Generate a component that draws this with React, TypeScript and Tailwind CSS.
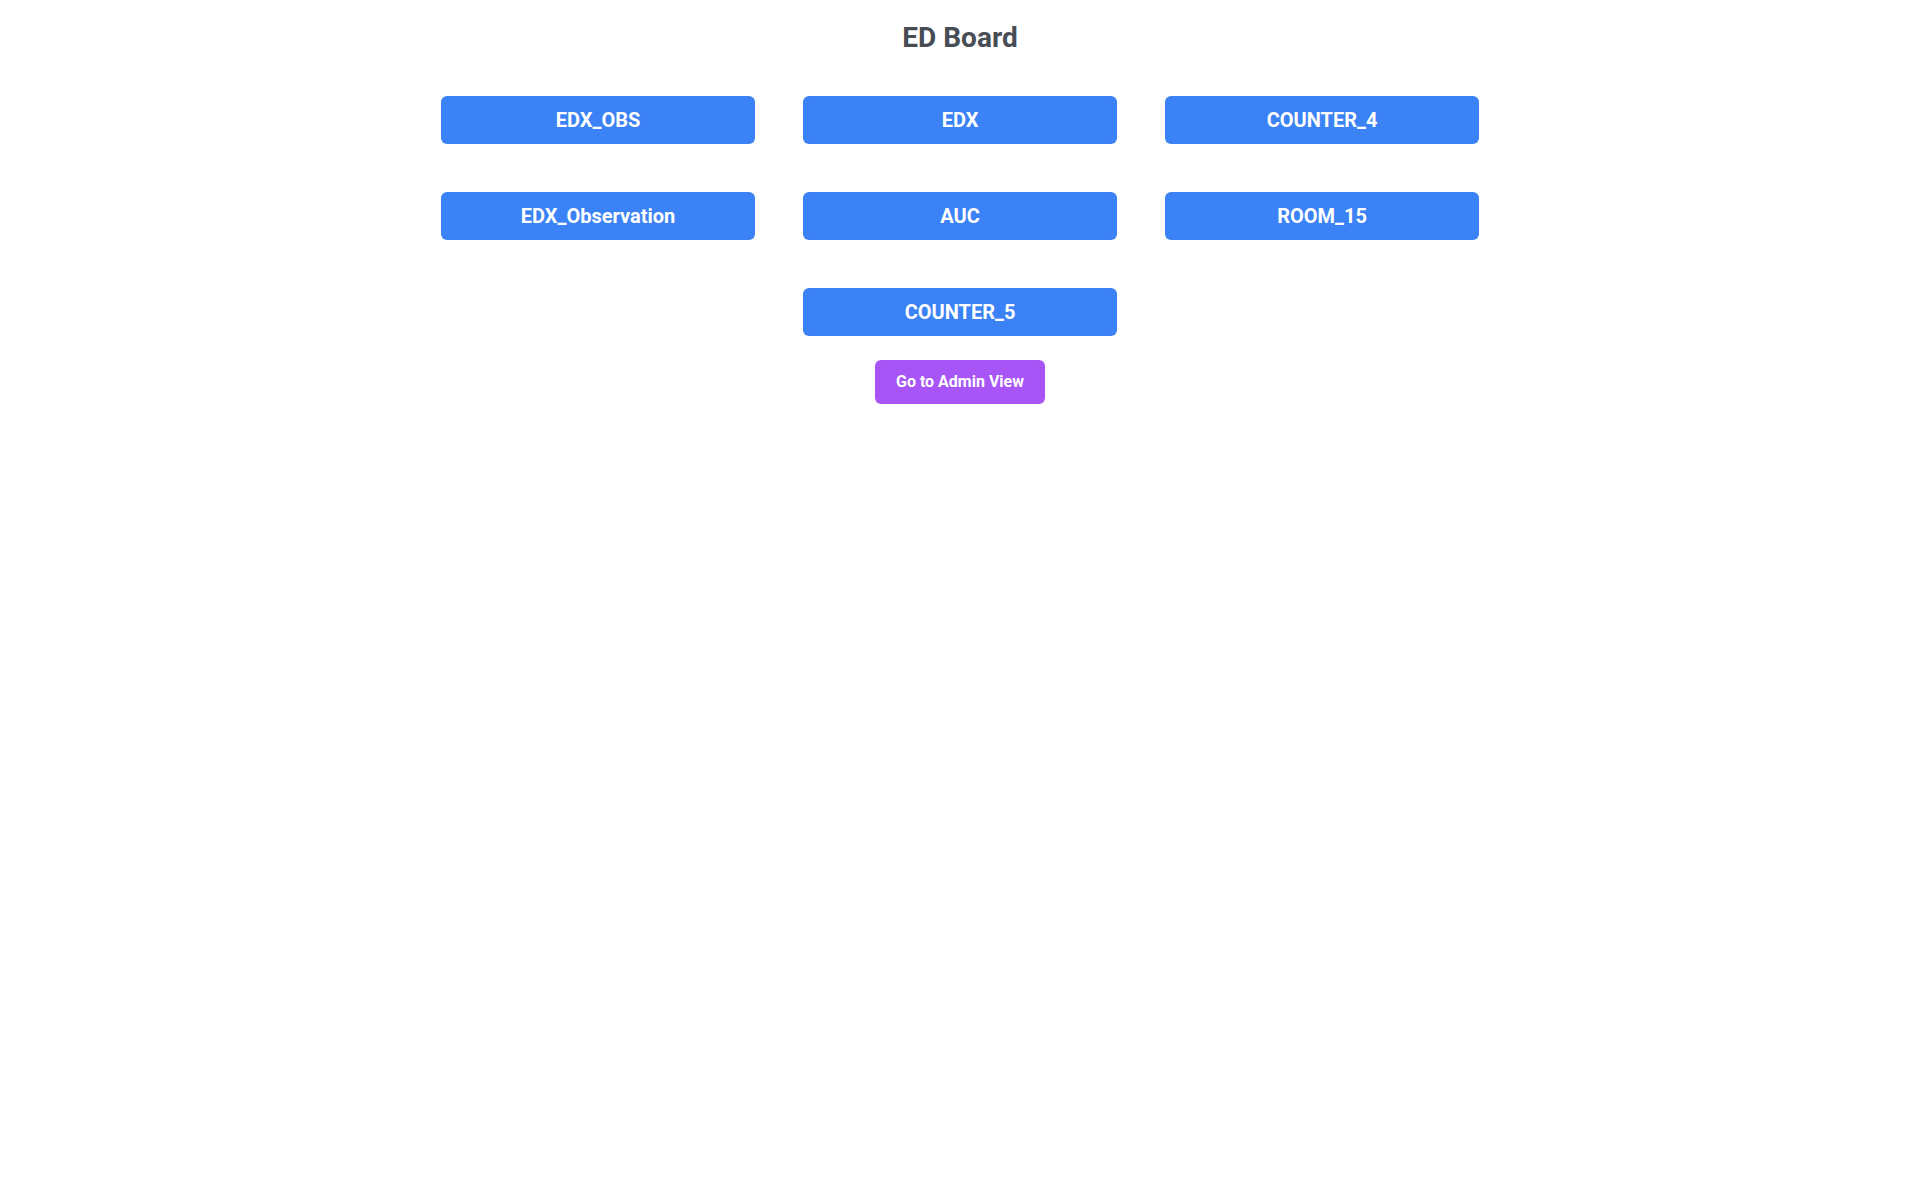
const rooms = [
  "EDX_OBS",
  "EDX",
  "COUNTER_4",
  "EDX_Observation",
  "AUC",
  "ROOM_15",
  "COUNTER_5",
];

export default function App() {
  return (
    <div className="min-h-screen bg-white font-['Roboto',sans-serif] flex flex-col items-center pt-5">
      <h1 className="text-[28px] leading-9 font-bold text-[#474c55] mb-10">ED Board</h1>

      <div className="w-[1038px] flex flex-wrap justify-center gap-12">
        {rooms.map((room) => (
          <button
            key={room}
            className="w-[314px] py-2.5 rounded-md bg-[#3b82f6] text-white text-xl font-bold"
          >
            {room}
          </button>
        ))}
      </div>

      <button className="mt-6 px-[21px] py-2.5 rounded-md bg-[#a855f7] text-white text-base font-bold">
        Go to Admin View
      </button>
    </div>
  );
}
